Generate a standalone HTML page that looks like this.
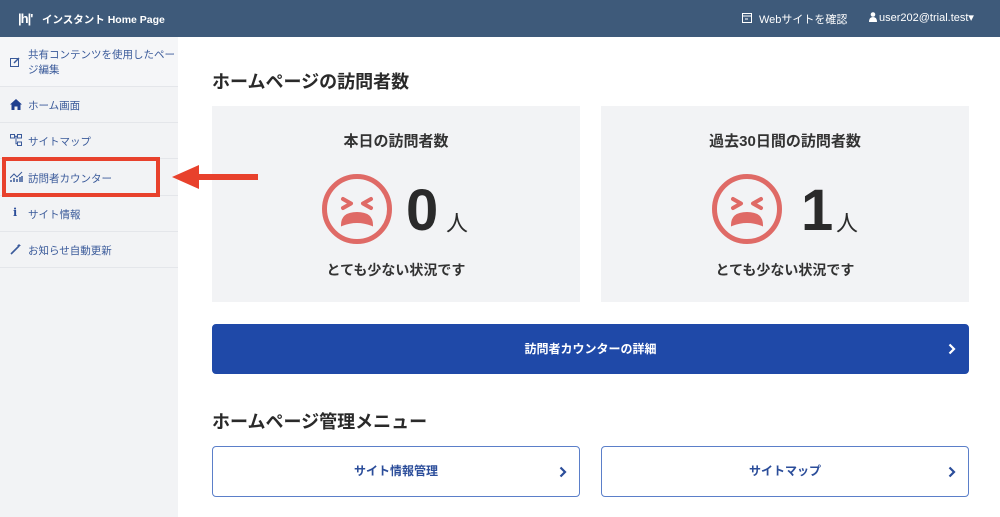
<!DOCTYPE html>
<html><head><meta charset="utf-8"><style>
*{margin:0;padding:0;box-sizing:border-box}
body{width:1000px;height:517px;overflow:hidden;background:#fff;font-family:"Liberation Sans","Noto Sans CJK JP",sans-serif;position:relative;color:#333}
.hdr{position:absolute;left:0;top:0;width:1000px;height:37px;background:#3e5a7a;color:#fff}
.side{position:absolute;left:0;top:37px;width:178px;height:480px;background:#f2f3f5}
.it{position:absolute;left:0;width:178px;border-bottom:1px solid #e4e6ea;font-size:10.5px;color:#3a5a9a;}
.it span{position:absolute;left:28px}
.ic{position:absolute;left:10px}
.abs{position:absolute}
.card{position:absolute;top:106px;width:368px;height:196px;background:#f2f3f5}
.card .t{position:absolute;width:100%;text-align:center;font-size:15px;font-weight:bold;top:24px}
.card .b{position:absolute;top:154px;width:100%;text-align:center;font-size:14px;font-weight:bold}
.num{position:absolute;top:70px;font-size:58px;font-weight:bold;color:#2a2a2a;line-height:70px}
.nin{position:absolute;top:100px;font-size:22px;color:#2a2a2a}
.h2{position:absolute;left:212px;font-size:18px;font-weight:bold;color:#2a2a2a}
.btn{position:absolute;border:1px solid #2b4d9a;border-radius:4px;color:#2b4d9a;font-size:12px;font-weight:bold;text-align:center}
.chev{position:absolute;right:12px;top:50%;margin-top:-6px}
</style></head><body>
<div class="hdr">
 <div class="abs" style="left:18px;top:11px;font-size:13px;font-weight:bold;letter-spacing:-1px">|h|'</div>
 <div class="abs" style="left:42px;top:12px;font-size:10.5px;font-weight:bold">インスタント Home Page</div>
 <svg class="abs" style="left:742px;top:13px" width="10" height="10"><rect x="0.5" y="0.5" width="9" height="9" fill="none" stroke="#fff"/><line x1="0" y1="3" x2="10" y2="3" stroke="#fff"/><line x1="3" y1="6" x2="6" y2="6" stroke="#fff"/></svg>
 <div class="abs" style="left:759px;top:11px;font-size:11px">Webサイトを確認</div>
 <svg class="abs" style="left:869px;top:12px" width="8" height="10"><circle cx="4" cy="2.5" r="2.3" fill="#fff"/><path d="M0 10 Q0 5 4 5 Q8 5 8 10Z" fill="#fff"/></svg>
 <div class="abs" style="left:879px;top:11px;font-size:11px">user202@trial.test▾</div>
</div>
<div class="side">
 <div class="it" style="top:0;height:50px;background:#f5f6f8"><svg class="ic" style="top:20px" width="10" height="10"><rect x="0.5" y="1.5" width="8" height="8" fill="none" stroke="#3a5a9a"/><path d="M4 6 L9 1" stroke="#3a5a9a" stroke-width="1.5"/></svg><span style="top:11px;line-height:15px;width:148px">共有コンテンツを使用したペー<br>ジ編集</span></div>
 <div class="it" style="top:50px;height:36px"><svg class="ic" style="top:12px" width="12" height="11"><path d="M6 0 L12 5.5 H10.5 V11 H7.5 V7.5 H4.5 V11 H1.5 V5.5 H0Z" fill="#1f3f8f"/></svg><span style="top:11px">ホーム画面</span></div>
 <div class="it" style="top:86px;height:36px"><svg class="ic" style="top:11px" width="12" height="12" fill="none" stroke="#3a5a9a"><rect x="0.5" y="0.5" width="4" height="3.5"/><rect x="7.5" y="0.5" width="4" height="3.5"/><rect x="7.5" y="8" width="4" height="3.5"/><path d="M4.5 2.2H7.5M6 2.2V9.7H7.5"/></svg><span style="top:11px">サイトマップ</span></div>
 <div class="it" style="top:122px;height:37px"><svg class="ic" style="top:12px" width="13" height="11" stroke="#3a5a9a"><path d="M0 7 L4 3 L7 6 L12 1" fill="none"/><path d="M1 11V9M4 11V7M7 11V8M10 11V6M12 11V5" stroke-width="1.5"/></svg><span style="top:12px">訪問者カウンター</span></div>
 <div class="it" style="top:159px;height:36px"><div class="ic" style="top:10px;left:13px;font-size:11px;font-weight:bold;font-family:'DejaVu Serif',serif;color:#2b4d9a">i</div><span style="top:11px">サイト情報</span></div>
 <div class="it" style="top:195px;height:36px"><svg class="ic" style="top:12px" width="11" height="11"><path d="M1 10 L9 2" stroke="#3a5a9a" stroke-width="1.6"/><path d="M9 0V3M7.5 1.5H10.5" stroke="#3a5a9a"/></svg><span style="top:11px">お知らせ自動更新</span></div>
</div>

<div class="h2" style="top:68px">ホームページの訪問者数</div>
<div class="card" style="left:212px"><div class="t">本日の訪問者数</div>
 <svg class="abs" style="left:109px;top:67px" width="72" height="72" fill="none" stroke="#df6a66" stroke-width="5"><circle cx="36" cy="36" r="32.5"/><path d="M22 26 L30 30.5 L22 35M50 26 L42 30.5 L50 35" stroke-width="4" stroke-linecap="round" stroke-linejoin="round"/><path d="M21 52 Q21 40 36 40 Q51 40 51 52 Q36 46 21 52Z" fill="#df6a66" stroke-width="2"/></svg>
 <div class="num" style="left:194px">0</div><div class="nin" style="left:234px">人</div>
 <div class="b">とても少ない状況です</div></div>
<div class="card" style="left:601px"><div class="t">過去30日間の訪問者数</div>
 <svg class="abs" style="left:110px;top:67px" width="72" height="72" fill="none" stroke="#df6a66" stroke-width="5"><circle cx="36" cy="36" r="32.5"/><path d="M22 26 L30 30.5 L22 35M50 26 L42 30.5 L50 35" stroke-width="4" stroke-linecap="round" stroke-linejoin="round"/><path d="M21 52 Q21 40 36 40 Q51 40 51 52 Q36 46 21 52Z" fill="#df6a66" stroke-width="2"/></svg>
 <div class="num" style="left:200px">1</div><div class="nin" style="left:235px">人</div>
 <div class="b">とても少ない状況です</div></div>

<div class="abs" style="left:2px;top:157px;width:158px;height:40px;border:4px solid #e8412c;z-index:5"></div>
<svg class="abs" style="left:172px;top:163px;z-index:5" width="86" height="28"><path d="M0 14 L27 2 V11 H86 V17 H27 V26Z" fill="#e8412c"/></svg>

<div class="btn" style="left:212px;top:324px;width:757px;height:50px;background:#1f49a8;border-color:#1f49a8;color:#fff;line-height:48px">訪問者カウンターの詳細<svg class="chev" width="8" height="12"><path d="M1.5 1.5 L6 6 L1.5 10.5" fill="none" stroke="#fff" stroke-width="2.2"/></svg></div>
<div class="h2" style="top:408px">ホームページ管理メニュー</div>
<div class="btn" style="left:212px;top:446px;width:368px;height:51px;line-height:49px;border-color:#5b7fc9">サイト情報管理<svg class="chev" width="8" height="12"><path d="M1.5 1.5 L6 6 L1.5 10.5" fill="none" stroke="#2b4d9a" stroke-width="2.2"/></svg></div>
<div class="btn" style="left:601px;top:446px;width:368px;height:51px;line-height:49px;border-color:#5b7fc9">サイトマップ<svg class="chev" width="8" height="12"><path d="M1.5 1.5 L6 6 L1.5 10.5" fill="none" stroke="#2b4d9a" stroke-width="2.2"/></svg></div>
</body></html>
